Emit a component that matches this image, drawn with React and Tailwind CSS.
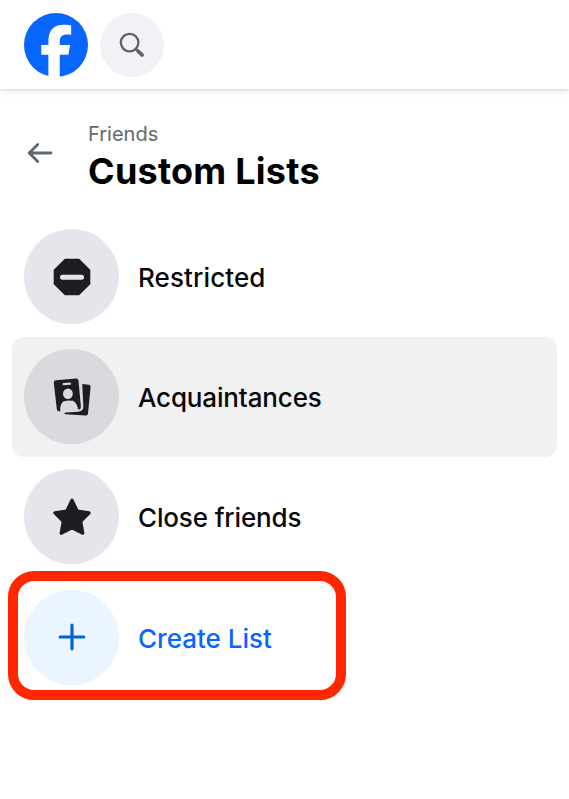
function FacebookLogo() {
  return (
    <svg className="size-[64px]" viewBox="0 0 63 63" aria-label="Facebook">
      <circle cx="31.5" cy="31.5" r="31.5" fill="#0866ff" />
      <path
        fill="#fff"
        d="M24 63V41H17V31.4H24V28.2C24 17.2 28.8 11.6 39.2 11.6C41.9 11.6 45.2 12 46.4 12.4V21.3C45.4 21.2 44.2 21.1 42.4 21.1C37.4 21.1 35.2 23.3 35.2 28.4V31.4H45.4L43.7 41H35.2V63Z"
      />
    </svg>
  );
}

function SearchIcon() {
  return (
    <svg className="size-[64px]" viewBox="0 0 64 64" fill="none" stroke="#606266">
      <circle cx="29.6" cy="29.6" r="8.8" strokeWidth="2.3" />
      <path d="M35.9 36L38.2 38.2" strokeWidth="2.6" />
      <path d="M38.3 38.3L42.1 42" strokeWidth="3.8" strokeLinecap="round" />
    </svg>
  );
}

function RestrictedIcon() {
  return (
    <svg className="size-[38px]" viewBox="0 0 38 38">
      <path
        d="M12.3 1.7H25.7L36.3 12.3V25.7L25.7 36.3H12.3L1.7 25.7V12.3Z"
        fill="#1c1e21"
        stroke="#1c1e21"
        strokeWidth="2"
        strokeLinejoin="round"
      />
      <rect x="7" y="16.7" width="24" height="5" rx="2.5" fill="#e4e6eb" />
    </svg>
  );
}

function AcquaintancesIcon() {
  return (
    <svg className="size-[38px]" viewBox="0 0 38 38">
      <path
        fill="#1c1e21"
        d="M29.2 6.1L35.9 6.8Q37.8 7 37.6 9L35 35.6Q34.8 37.8 32.6 37.6L13 36.2Q11.4 36 11.4 35.2Q11.4 34.5 13 34.4L25.5 33.7Q30.5 33.2 30.4 28.6Z"
      />
      <path
        fill="#1c1e21"
        d="M3.1 2.2L22.8 .6Q25.3 .4 25.5 2.8L27.9 28.7Q28 31.2 25.8 31.5L24.7 31.5Q24.8 25 19.2 22.5Q17.2 23.5 14.9 23.5Q12.4 23.6 10.8 22.9Q6.4 26.3 7.6 33.2L6.2 33.3Q4.1 33.5 3.8 31L.8 4.9Q.6 2.4 3.1 2.2Z"
      />
      <path d="M10.7 6.1L17 5.7" stroke="#d9dade" strokeWidth="2.2" strokeLinecap="round" />
      <ellipse cx="14.9" cy="15.7" rx="4.9" ry="5.3" fill="#d9dade" />
      <path
        fill="#d9dade"
        d="M7.5 33.5Q6.9 26.5 10.9 23.9Q14.8 21.5 19.2 23.1Q23.7 25.1 24.7 31.6L24 33H7.5Z"
      />
    </svg>
  );
}

function StarIcon() {
  return (
    <svg className="size-[38px]" viewBox="0 0 38 38">
      <path
        d="M19 2.2L24.2 13L36.1 14.9L27.7 23.4L29.8 35.2L19 29.9L8.2 35.2L10.3 23.4L1.9 14.9L13.8 13Z"
        fill="#1c1e21"
        stroke="#1c1e21"
        strokeWidth="3.2"
        strokeLinejoin="round"
      />
    </svg>
  );
}

function PlusIcon() {
  return (
    <svg className="size-[38px]" viewBox="0 0 38 38" fill="none" stroke="#0064d1" strokeWidth="3.2" strokeLinecap="round">
      <path d="M19 7.2V30.8M7.2 19H30.8" />
    </svg>
  );
}

function ListRow({ icon, label, rowClass = "", circleClass, labelClass }) {
  return (
    <li className={`flex h-[120px] items-center rounded-xl pl-3 ${rowClass}`}>
      <span className={`flex size-[95px] shrink-0 items-center justify-center rounded-full ${circleClass}`}>
        {icon}
      </span>
      <span className={`ml-[19px] whitespace-nowrap text-[26px] leading-8 font-medium ${labelClass}`}>
        {label}
      </span>
    </li>
  );
}

export default function App() {
  return (
    <div className="h-[799px] w-[569px] overflow-hidden bg-white font-['Inter',sans-serif] text-[#080809]">
      <header className="flex h-[89px] items-start gap-[12px] pt-[13px] pl-6 shadow-[0_1px_3px_rgba(0,0,0,0.1),0_3px_7px_rgba(0,0,0,0.07)]">
        <FacebookLogo />
        <button className="size-[64px] rounded-full bg-[#f0f2f5]" aria-label="Search">
          <SearchIcon />
        </button>
      </header>

      <div className="flex h-[128px] pt-[32px] pl-[27px]">
        <svg
          className="mt-[21px] h-[22px] w-[26px] shrink-0"
          viewBox="0 0 26 22"
          fill="none"
          stroke="#606770"
          strokeWidth="2.8"
          strokeLinecap="round"
          strokeLinejoin="round"
        >
          <path d="M24 11H2.2M10.7 2.4L2.2 11L10.7 19.6" />
        </svg>
        <div className="ml-[35px]">
          <p className="text-[20px] leading-[26px] text-[#65686c]">Friends</p>
          <h1 className="text-[36px] leading-[48px] font-bold tracking-[0.25px] whitespace-nowrap text-black">
            Custom Lists
          </h1>
        </div>
      </div>

      <ul className="mx-3 flex flex-col">
        <ListRow
          icon={<RestrictedIcon />}
          label="Restricted"
          rowClass="pb-px"
          circleClass="bg-[#e4e6eb]"
          labelClass="mt-[3px] tracking-[0.1px]"
        />
        <ListRow
          icon={<AcquaintancesIcon />}
          label="Acquaintances"
          rowClass="bg-[#f1f1f1] pb-px"
          circleClass="bg-[#d9dade]"
          labelClass="mt-[3px] tracking-[-0.15px]"
        />
        <ListRow
          icon={<StarIcon />}
          label="Close friends"
          rowClass="pb-px"
          circleClass="bg-[#e4e6eb]"
          labelClass="mt-[3px] tracking-[-0.15px]"
        />
        <li className="relative">
          <ul>
            <ListRow
              icon={<PlusIcon />}
              label="Create List"
              circleClass="bg-[#ebf5ff]"
              labelClass="mt-1 text-[#0866ff]"
            />
          </ul>
          <span className="pointer-events-none absolute -top-[6px] -left-1 h-[129px] w-[338px] rounded-[26px] border-[10px] border-[#ff2600]" />
        </li>
      </ul>
    </div>
  );
}
